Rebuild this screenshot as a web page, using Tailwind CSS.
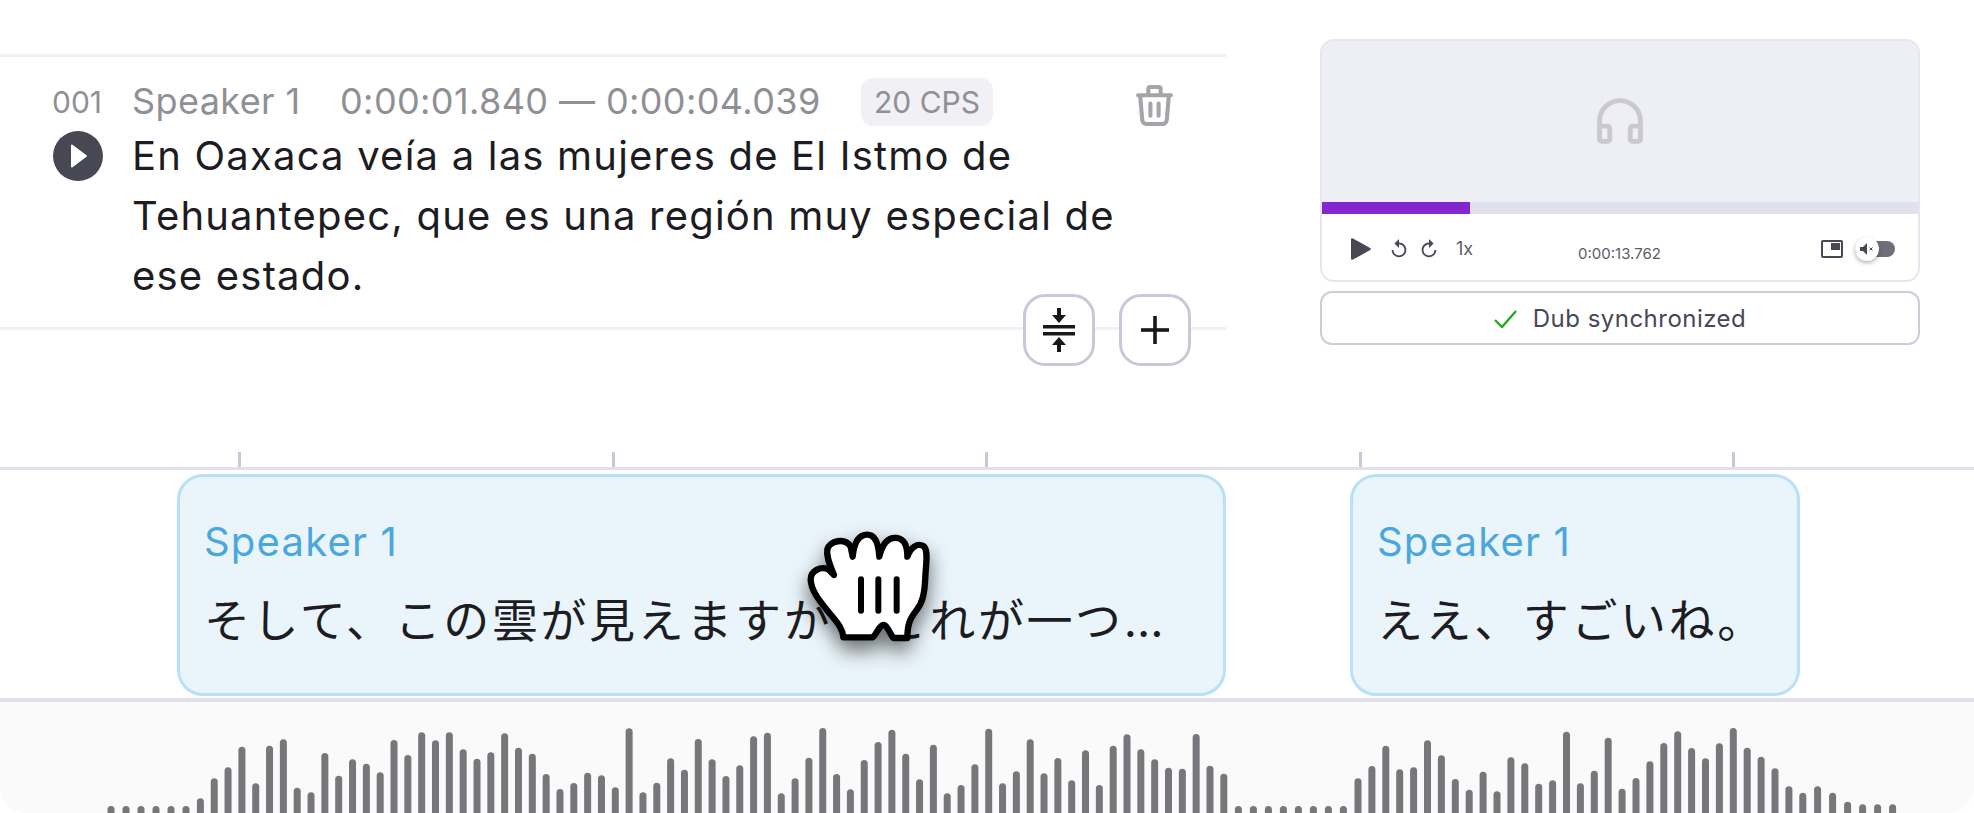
<!doctype html>
<html lang="en">
<head>
    <meta charset="UTF-8">
    <title>Dub editor</title>
    <script src="https://cdn.jsdelivr.net/npm/@tailwindcss/browser@4"></script>
</head>
<body class="bg-white h-[813px] overflow-hidden font-['Inter','Noto_Sans_CJK_JP',sans-serif] text-[#1c1c22]">
    <div class="relative h-[813px] w-[1974px]">
        <!-- top: segment + player -->
        <div class="flex h-[452px] items-start">
            <div class="relative mt-[54px] w-[1226px] border-y-[3px] border-[#f0f0f5] py-[21px] pl-[52px]">
                <div class="flex h-[48px] items-center text-[36px] leading-[48px] tracking-[0.4px] text-[#8f8f96]">
                    <span class="w-[80px] text-[30px] tracking-normal">001</span>
                    <span class="w-[208px] pb-[2px]">Speaker 1</span>
                    <span class="w-[477px] whitespace-nowrap pb-[2px]">0:00:01.840 — 0:00:04.039</span>
                    <span class="ml-[44px] flex h-[48px] w-[132px] items-center justify-center rounded-xl bg-[#f0f0f5] text-[30px] tracking-normal">20 CPS</span>
                    <svg class="ml-[143px] mt-[6px] h-[41px] w-[37px]" viewBox="3 2 18 20" fill="none" stroke="#a5a5a9" stroke-width="2" stroke-linecap="round" stroke-linejoin="round">
                        <path d="M4 7h16M10 11v6M14 11v6M5 7l1 12a2 2 0 0 0 2 2h8a2 2 0 0 0 2-2l1-12M9 7V4a1 1 0 0 1 1-1h4a1 1 0 0 1 1 1v3"/>
                    </svg>
                </div>
                <div class="flex">
                    <div class="w-[80px] pl-[1px] pt-[5px]">
                        <div class="flex h-[50px] w-[50px] items-center justify-center rounded-full bg-[#484855]">
                            <svg class="ml-[2px] h-[24px] w-[16px]" viewBox="0 0 16 24"><path d="M0 1.5v21a1 1 0 0 0 1.5.8l14-10.5a1 1 0 0 0 0-1.6L1.5.7A1 1 0 0 0 0 1.5z" fill="#fff"/></svg>
                        </div>
                    </div>
                    <p class="w-[1010px] text-[40px] leading-[60px] tracking-[1.2px]">En Oaxaca veía a las mujeres de El Istmo de Tehuantepec, que es una región muy especial de ese estado.</p>
                </div>
                <div class="absolute left-[1023px] top-[237px] flex gap-[24px]">
                    <button class="flex h-[72px] w-[72px] items-center justify-center rounded-[22px] border-[3px] border-[#c8c8d8] bg-white">
                        <svg class="h-[44px] w-[32px]" viewBox="0 0 32 44" fill="#18181b">
                            <path d="M14 0h4v7h5l-7 8-7-8h5z"/>
                            <rect x="0" y="17" width="32" height="3.5"/>
                            <rect x="0" y="24" width="32" height="3.5"/>
                            <path d="M14 44h4v-7h5l-7-8-7 8h5z"/>
                        </svg>
                    </button>
                    <button class="flex h-[72px] w-[72px] items-center justify-center rounded-[22px] border-[3px] border-[#c8c8d8] bg-white">
                        <svg class="h-[28px] w-[28px]" viewBox="0 0 28 28" fill="#18181b">
                            <rect x="12.2" y="0" width="3.6" height="28"/>
                            <rect x="0" y="12.2" width="28" height="3.6"/>
                        </svg>
                    </button>
                </div>
            </div>

            <div class="ml-[94px] mt-[39px] w-[600px]">
                <div class="h-[243px] overflow-hidden rounded-[14px] border-2 border-[#e6e6f0]">
                    <div class="flex h-[161px] items-center justify-center bg-[#eeeff4]">
                        <svg class="mt-[-2px] h-[46px] w-[46px]" viewBox="3 3 18 18" fill="none" stroke="#c9c9cf" stroke-width="1.9" stroke-linecap="round" stroke-linejoin="round">
                            <rect x="4" y="14" width="4" height="6" rx="1"/>
                            <rect x="16" y="14" width="4" height="6" rx="1"/>
                            <path d="M4 16v-4a8 8 0 0 1 16 0v4"/>
                        </svg>
                    </div>
                    <div class="h-[12px] bg-[#e1e1ee]"><div class="h-full w-[148px] bg-[#8427cf]"></div></div>
                    <div class="relative flex h-[66px] items-center pl-[29px] pr-[23px] pt-[3px]">
                        <svg class="h-[22px] w-[20px]" viewBox="0 0 20 22"><path d="M0 1.5v19a1.3 1.3 0 0 0 2 1.1l17.2-9.5a1.3 1.3 0 0 0 0-2.2L2 .4A1.3 1.3 0 0 0 0 1.5z" fill="#484855"/></svg>
                        <svg class="ml-[17px] h-[22px] w-[22px]" viewBox="0 0 24 24" fill="#484855"><path d="M12 5V1L7 6l5 5V7c3.31 0 6 2.69 6 6s-2.69 6-6 6-6-2.69-6-6H4c0 4.42 3.58 8 8 8s8-3.58 8-8-3.58-8-8-8z"/></svg>
                        <svg class="ml-[8px] h-[22px] w-[22px] -scale-x-100" viewBox="0 0 24 24" fill="#484855"><path d="M12 5V1L7 6l5 5V7c3.31 0 6 2.69 6 6s-2.69 6-6 6-6-2.69-6-6H4c0 4.42 3.58 8 8 8s8-3.58 8-8-3.58-8-8-8z"/></svg>
                        <span class="ml-[16px] text-[18px] text-[#5c5c66]">1x</span>
                        <span class="absolute left-[256px] top-[30px] text-[15px] leading-[20px] text-[#5c5c66]">0:00:13.762</span>
                        <div class="ml-auto flex items-center">
                            <svg class="h-[18px] w-[22px]" viewBox="0 0 22 18" fill="none">
                                <rect x="1" y="1" width="20" height="16" rx="1" stroke="#484855" stroke-width="2"/>
                                <rect x="10" y="3" width="9" height="7" fill="#484855"/>
                            </svg>
                            <div class="relative ml-[12px] h-[16px] w-[40px] rounded-full bg-[#6f6f7b]">
                                <div class="absolute left-[0px] top-[-4px] flex h-[24px] w-[24px] items-center justify-center rounded-full bg-white shadow-[0_2px_4px_rgba(0,0,0,0.3)]">
                                    <svg class="h-[12px] w-[14px]" viewBox="0 0 14 12" fill="#484855"><path d="M0 4h3l4-4v12L3 8H0z"/><path d="M9.5 4.5l3 3m0-3l-3 3" stroke="#484855" stroke-width="1"/></svg>
                                </div>
                            </div>
                        </div>
                    </div>
                </div>
                <div class="mt-[9px] flex h-[54px] items-center justify-center gap-[16px] rounded-xl border-2 border-[#cdcdd9] pt-[1px] text-[24px] tracking-[0.02em] text-[#484855]">
                    <svg class="h-[18px] w-[23px]" viewBox="0 0 23 18" fill="none"><path d="M1 10l7 7L22 1" stroke="#22aa22" stroke-width="2.4"/></svg>
                    <span>Dub synchronized</span>
                </div>
            </div>
        </div>

        <!-- timeline ruler -->
        <div class="flex h-[15px] gap-[370.6px] pl-[238px]">
            <div class="w-[3px] bg-[#c8c8d8]"></div>
            <div class="w-[3px] bg-[#c8c8d8]"></div>
            <div class="w-[3px] bg-[#c8c8d8]"></div>
            <div class="w-[3px] bg-[#c8c8d8]"></div>
            <div class="w-[3px] bg-[#c8c8d8]"></div>
        </div>
        <div class="flex h-[235px] items-center border-t-[3px] border-b-4 border-[#e1e1ee] pt-[2px]">
            <div class="ml-[177px] flex h-[222px] w-[1049px] flex-col justify-center rounded-[26px] border-[3px] border-[#b8e0f9] bg-[#eaf5fb] pb-[3px] pl-[24px]">
                <div class="text-[40px] leading-[54px] tracking-[1.2px] text-[#4aa7dd]">Speaker 1</div>
                <div class="mt-[19px] whitespace-nowrap text-[46px] leading-[64px] tracking-[2.6px]">そして、この雲が見えますか？これが一つ…</div>
            </div>
            <div class="ml-[124px] flex h-[222px] w-[450px] flex-col justify-center rounded-[26px] border-[3px] border-[#b8e0f9] bg-[#eaf5fb] pb-[3px] pl-[24px]">
                <div class="text-[40px] leading-[54px] tracking-[1.2px] text-[#4aa7dd]">Speaker 1</div>
                <div class="mt-[19px] whitespace-nowrap text-[46px] leading-[64px] tracking-[2.6px]">ええ、すごいね。</div>
            </div>
        </div>

        <!-- waveform -->
        <div class="h-[111px] overflow-hidden rounded-b-[26px] bg-[#fafafa]">
            <svg id="wave" class="block" width="1974" height="111"></svg>
        </div>

        <!-- hand cursor -->
        <svg class="absolute left-[780px] top-[510px] h-[150px] w-[200px] drop-shadow-[0_10px_10px_rgba(0,0,0,0.55)]" viewBox="0 0 600 450">
            <path d="M190 382 C188 352 165 330 145 305 C118 272 92 240 92 208 C92 182 122 168 145 178 L162 195 C150 165 138 140 142 118 C148 92 195 82 212 110 L218 140 C222 100 235 74 262 74 C290 74 296 110 298 140 C306 105 322 80 352 84 C376 88 382 115 382 140 C392 112 412 98 430 108 C446 118 438 160 436 200 C434 250 428 278 410 300 C395 320 382 335 382 384 L340 384 C330 372 322 345 310 345 C298 345 290 372 278 382 Z" fill="#fff" stroke="#000" stroke-width="19" stroke-linejoin="round"/>
            <path d="M243 208V302M295 208V302M350 208V302" stroke="#000" stroke-width="18" stroke-linecap="round"/>
        </svg>
    </div>

    <script>
        // tops are measured on a 3x grid, starting at y 680 of the page
        const segments = [
            { x: 111, step: 15, tops: [378, 378, 378, 378, 378, 378] },
            { x: 200.4, step: 13.83, tops: [355, 295, 262, 200, 310, 197, 178, 323, 337, 219, 287, 238, 251, 277, 180, 225, 157, 181, 157, 208, 236, 217, 160, 203, 221, 282, 327, 309, 278, 286, 322, 145, 337, 308, 235, 269, 177, 238, 288, 256, 169, 158, 340, 295, 233, 144, 282, 328, 240, 186, 149, 221, 298, 194, 340, 315, 253, 146, 310, 274, 178, 280, 234, 301, 211, 315, 197, 163, 208, 238, 263, 266, 162, 257, 281] },
            { x: 1238.4, step: 15, tops: [378, 378, 378, 378, 378, 378, 378, 378] },
            { x: 1358, step: 13.9, tops: [295, 258, 197, 268, 262, 181, 226, 297, 329, 275, 334, 232, 250, 311, 301, 155, 310, 272, 173, 326, 294, 244, 189, 154, 204, 235, 190, 144, 203, 230, 265, 319, 338] },
            { x: 1817.6, step: 15, tops: [319, 338, 365, 373, 373, 373] },
        ];

        const wave = document.getElementById('wave');
        let bars = '';
        segments.forEach(seg => {
            seg.tops.forEach((top, i) => {
                const x = seg.x + i * seg.step;
                const y = 680 + top / 3 - 702 + 3.5;
                bars += `<line x1="${x}" x2="${x}" y1="${y}" y2="120" stroke="#77777b" stroke-width="7" stroke-linecap="round"/>`;
            });
        });
        wave.innerHTML = bars;
    </script>
</body>
</html>
